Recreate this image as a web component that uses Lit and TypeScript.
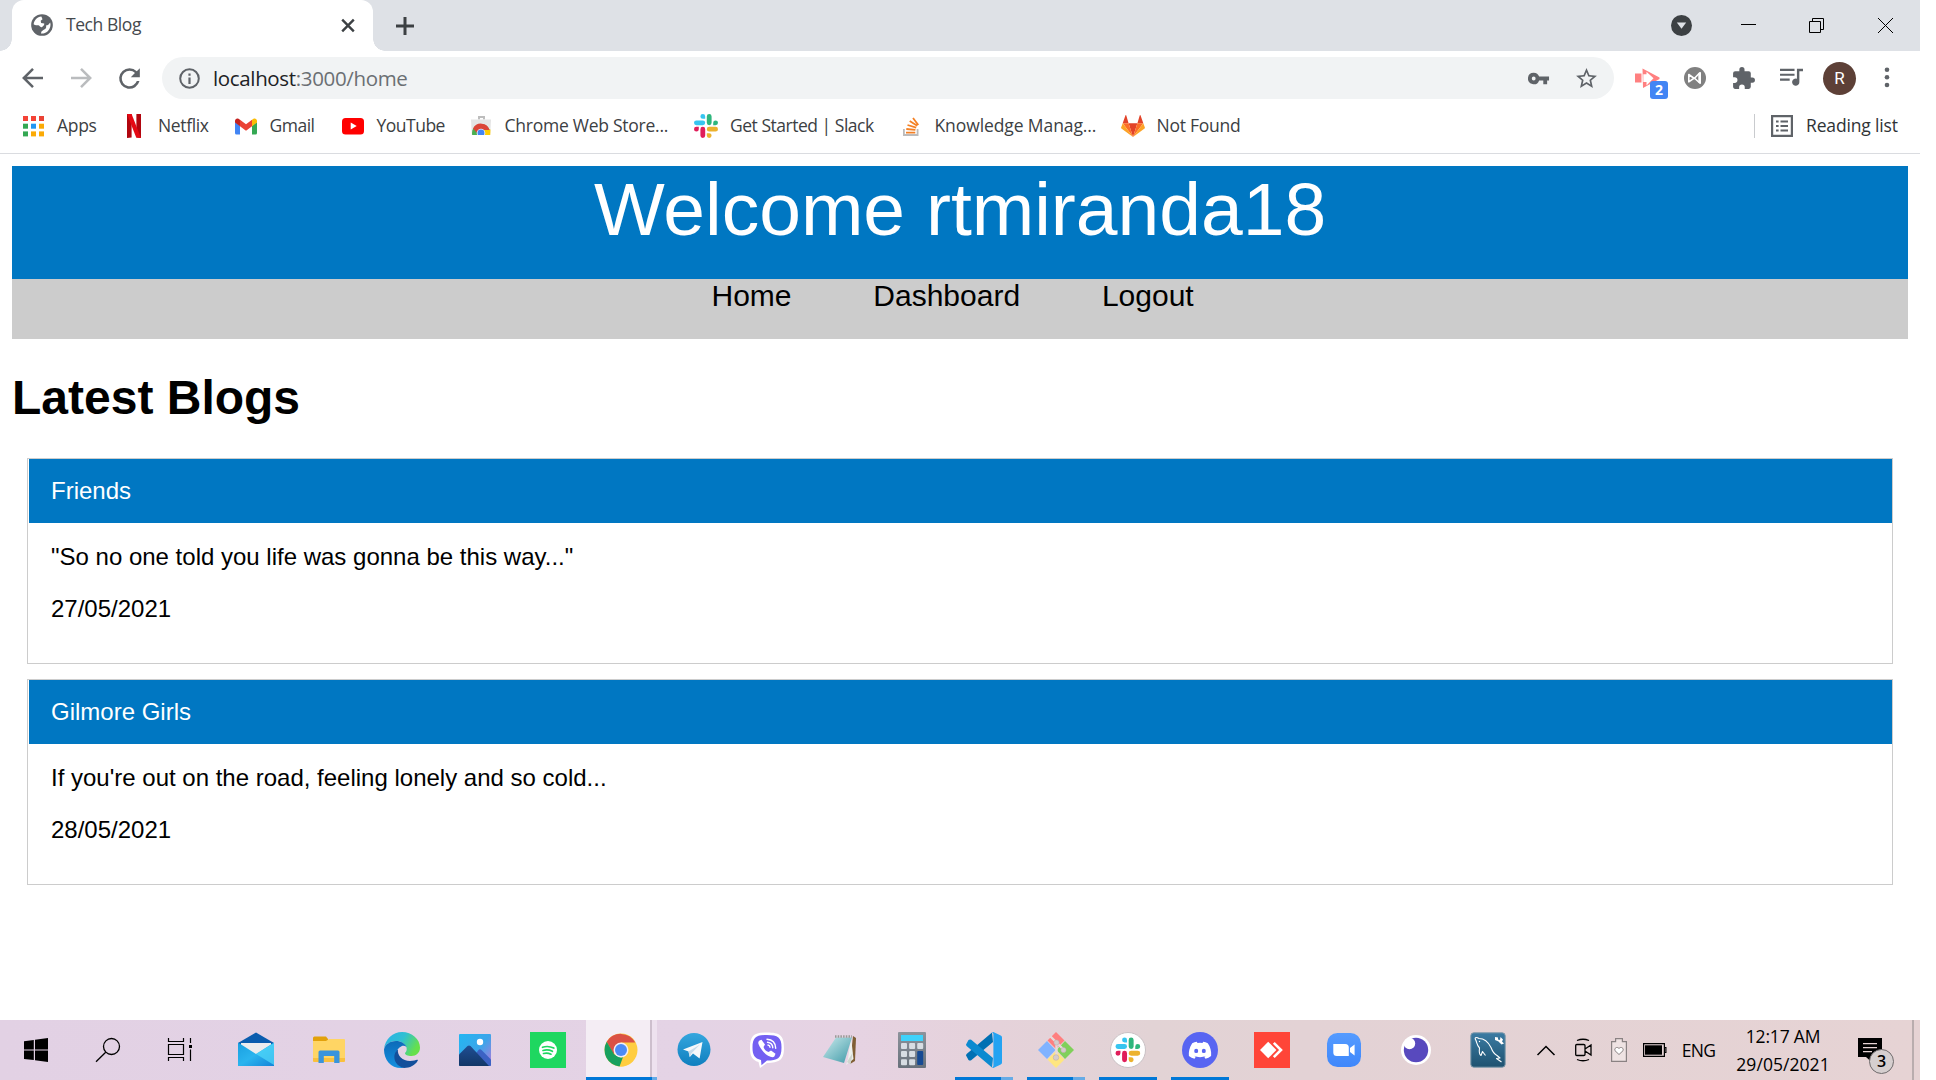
import { LitElement, html, css, svg, nothing } from "lit";
import type { TemplateResult } from "lit";
import { customElement, property } from "lit/decorators.js";
import { styleMap } from "lit/directives/style-map.js";

const icon = (size: number, box: string, body: unknown, h = size) =>
  html`<svg class="icon" width=${size} height=${h} viewBox=${box} aria-hidden="true">${body}</svg>`;

const label = (text: string, spacing = 0) =>
  html`<span class="label" style=${styleMap({ letterSpacing: `${spacing}px` })}>${text}</span>`;

const shared = css`
  :host { display: block; box-sizing: border-box; }
  * { box-sizing: border-box; }
  .icon { display: block; flex: none; overflow: visible; }
  .label { white-space: nowrap; }
  .cell { display: flex; align-items: center; justify-content: center; flex: none; }
`;

const slackMark = svg`
  <path fill="#36c5f0" d="M8.8 0a2.4 2.4 0 1 0 0 4.8h2.4V2.4A2.4 2.4 0 0 0 8.8 0zM8.8 6.4H2.4a2.4 2.4 0 1 0 0 4.8h6.4a2.4 2.4 0 0 0 0-4.8z"/>
  <path fill="#2eb67d" d="M24 8.8a2.4 2.4 0 1 0-4.8 0v2.4h2.4A2.4 2.4 0 0 0 24 8.8zM17.6 8.8V2.4a2.4 2.4 0 1 0-4.8 0v6.4a2.4 2.4 0 1 0 4.8 0z"/>
  <path fill="#ecb22e" d="M15.2 24a2.4 2.4 0 1 0 0-4.8h-2.4v2.4a2.4 2.4 0 0 0 2.4 2.4zM15.2 17.6h6.4a2.4 2.4 0 1 0 0-4.8h-6.4a2.4 2.4 0 0 0 0 4.8z"/>
  <path fill="#e01e5a" d="M0 15.2a2.4 2.4 0 1 0 4.8 0v-2.4H2.4A2.4 2.4 0 0 0 0 15.2zM6.4 15.2v6.4a2.4 2.4 0 1 0 4.8 0v-6.4a2.4 2.4 0 0 0-4.8 0z"/>`;

const dots = ["#f44336", "#f44336", "#ea4335", "#34a853", "#2196f3", "#fbaa05", "#34a853", "#fbaa05", "#fbaa05"];

const bookmarks: { text: string; width: number; spacing: number; icon: TemplateResult }[] = [
  {
    text: "Apps", width: 101, spacing: -0.3,
    icon: icon(24, "0 0 24 24", dots.map((c, i) => svg`<rect x=${2 + (i % 3) * 8} y=${2 + Math.floor(i / 3) * 7.7} width="5" height="5" fill=${c}/>`)),
  },
  {
    text: "Netflix", width: 111.5, spacing: -0.35,
    icon: icon(24, "0 0 24 24", svg`<path fill="#b1060f" d="M5 0h4.600v23.400L5 24zM14.400 0H19v24l-4.600-.6z"/><path fill="#e50914" d="M5 0h4.600L19 24l-4.800-.6z"/>`),
  },
  {
    text: "Gmail", width: 107, spacing: -0.5,
    icon: icon(24, "0 0 24 24", svg`
      <path fill="#4285f4" d="M1 8l5 3.8V20.5H2.5A1.5 1.5 0 0 1 1 19z"/>
      <path fill="#34a853" d="M18 11.8L23 8v11a1.5 1.5 0 0 1-1.500 1.500H18z"/>
      <path fill="#fbbc04" d="M18 5.800l1.200-.9C20.800 3.700 23 4.800 23 6.800V8.500l-5 3.700z"/>
      <path fill="#ea4335" d="M6 5.800l6 4.500 6-4.500v6.400l-6 4.500-6-4.500z"/>
      <path fill="#c5221f" d="M1 6.800c0-2 2.200-3.100 3.800-1.900L6 5.800v6.400L1 8.500z"/>`),
  },
  {
    text: "YouTube", width: 128, spacing: -0.5,
    icon: icon(24, "0 0 24 24", svg`<rect x="1" y="4" width="22" height="16.500" rx="3.500" fill="#f00"/><path fill="#fff" d="M9.700 8.600v6.800l6-3.400z"/>`),
  },
  {
    text: "Chrome Web Store...", width: 225.5, spacing: -0.25,
    icon: icon(24, "0 0 24 24", svg`
      <path fill="#bdbdbd" d="M9 2h7v3.500h-2V4h-3v1.500H9z"/><path fill="#e4e4e4" d="M2 5.500h20L21.200 21H2.800z"/>
      <clipPath id="bag"><path d="M2 5.500h20L21.200 21H2.800z"/></clipPath>
      <g clip-path="url(#bag)"><circle cx="12" cy="19" r="9" fill="#4caf50"/><path fill="#ffcd00" d="M12 15.500h10V22H12z"/><path fill="#db4437" d="M4 14.500a9 9 0 0 1 16.600 1.500H12l-3 4z"/>
      <circle cx="12" cy="19" r="4.300" fill="#e8eefb"/><circle cx="12" cy="19" r="3.400" fill="#4285f4"/></g>`),
  },
  { text: "Get Started | Slack", width: 204.5, spacing: -0.48, icon: icon(24, "0 0 24 24", slackMark) },
  {
    text: "Knowledge Manag...", width: 222, spacing: -0.1,
    icon: icon(24, "0 0 24 24", svg`<path fill="none" stroke="#bcbbbb" stroke-width="1.800" d="M4.900 15v6h13.700v-6"/>
      <path fill="none" stroke="#f48024" stroke-width="1.800" d="M7 18.600h9.300M7.300 15l9.100.9M8.500 11l8.700 2.600M10.700 7l7.500 4.700M14 4l5.300 7"/>`),
  },
  {
    text: "Not Found", width: 300, spacing: -0.25,
    icon: icon(24, "0 0 24 24", svg`
      <path fill="#e24329" d="M12 23l4.400-13.700H7.600zM4.500 1.200L1.700 9.300h5.900L5.200 1.200a.4.400 0 0 0-.7 0zM19.500 1.200l2.800 8.100h-5.900l2.400-8.100a.4.400 0 0 1 .7 0z"/>
      <path fill="#fc6d26" d="M12 23L7.600 9.300H1.700zM12 23l4.400-13.700h5.900z"/>
      <path fill="#fca326" d="M1.700 9.300L.1 13.600a.9.900 0 0 0 .3 1L12 23zM22.300 9.300l1.600 4.300a.9.900 0 0 1-.3 1L12 23z"/>`),
  },
];

const arrow = svg`<path fill="none" stroke="currentColor" stroke-width="2.500" d="M22 12H3.500M12 2.800L2.800 12l9.200 9.200"/>`;

@customElement("browser-chrome")
export class BrowserChrome extends LitElement {
  static styles = [shared, css`
    :host { font-family: "Open Sans", "Noto Sans", sans-serif; color: #3c4043; width: 1920px; }
    .strip { display: flex; align-items: center; height: 51px; background: #dee1e6; padding-left: 12px; }
    .tab { position: relative; display: flex; align-items: center; width: 361px; height: 51px; background: #fff; border-radius: 12px 12px 0 0; padding: 0 13px 1px 17px; font-size: 17.500px; color: #45494d; }
    .tab::before, .tab::after { content: ""; position: absolute; bottom: 0; width: 12px; height: 12px; }
    .tab::before { left: -12px; background: radial-gradient(circle at 0 0, transparent 11.5px, #fff 12px); }
    .tab::after { right: -12px; background: radial-gradient(circle at 100% 0, transparent 11.5px, #fff 12px); }
    .title { flex: 1; padding: 0 0 2px 11px; }
    .plus { width: 64px; height: 50px; color: #3c4043; }
    .space { flex: 1; }
    .more { width: 64px; height: 50px; }
    .win { width: 69px; height: 43px; color: #000; }
    .toolbar { display: flex; align-items: center; height: 54px; background: #fff; padding-left: 9px; color: #5f6368; }
    .dim { color: #babcbe; }
    .omni { display: flex; align-items: center; width: 1452px; height: 42px; margin: 0 14px 0 8px; padding: 0 4px 0 15px; border-radius: 21px; background: #f1f3f4; font-size: 20.500px; }
    .url { flex: 1; padding: 0 0 1px 11px; letter-spacing: -0.35px; color: #6b6f73; line-height: 40px; }
    .host { color: #202124; }
    .ext { position: relative; width: 48px; height: 42px; }
    .count { position: absolute; left: 22px; top: 24px; width: 18px; height: 18px; border-radius: 3px; background: #4285f4; color: #fff; font: bold 14px/18px "Open Sans", sans-serif; text-align: center; }
    .avatar { width: 33px; height: 33px; border-radius: 50%; background: #5d4037; color: #fff; font: 17px/33px Roboto, sans-serif; text-align: center; }
    .marks { display: flex; align-items: center; height: 48px; padding: 0 0 6px 21px; font-size: 17.500px; background: #fff; }
    .marks .label { padding-bottom: 2px; }
    .mark { display: flex; align-items: center; gap: 12px; flex: none; }
    .reading { display: flex; align-items: center; width: 166px; height: 24px; border-left: 1px solid #c9cbce; padding-left: 16px; gap: 13px; color: #303336; }
    .rule { height: 1px; background: #dadce0; }
    .w48 { width: 48px; } .w49 { width: 49px; } .w38 { width: 38px; } .w58 { width: 58px; } .w59 { width: 59px; } .w36 { width: 36px; }
  `];

  render() {
    return html`
      <div class="strip">
        <div class="tab">
          ${icon(26, "0 0 24 24", svg`<circle cx="12" cy="12" r="10" fill="#5f6368"/><path fill="#fff" d="M11.400 4.200C7.600 4.600 4.600 7.700 4.300 11.300c1.200 1.100 2.800 1.100 4.200.9 1.300.2 1.500 1.500 2.800 1.800 1.500.2 1.400-1.300 2.600-1.700l.2-1.800-2.900-.3-.4-2.200 1.700-1.200z"/><path fill="#fff" d="M19.600 9.800c.8 2.800-.1 5.900-2.300 7.900-1.700 1.600-4 2.300-6.300 2.100l.5-1.900c1.500-.5 1.500-1.600 3-1.900 1.600-.6 1.500-2.400 1.200-3.500l1.900-.5z"/>`)}
          <span class="title">${label("Tech Blog", -0.43)}</span>
          ${icon(24, "0 0 24 24", svg`<path fill="none" stroke="#3c4043" stroke-width="2.400" d="M6.200 6.700l11.600 11.600M17.800 6.700L6.200 18.300"/>`)}
        </div>
        <div class="cell plus">${icon(18, "0 0 18 18", svg`<path fill="none" stroke="currentColor" stroke-width="3" d="M9 0v18M0 9h18"/>`)}</div>
        <div class="space"></div>
        <div class="cell more">${icon(21, "0 0 21 21", svg`<circle cx="10.500" cy="10.500" r="10.500" fill="#3c4043"/><path fill="#dee1e6" d="M5.800 7.500h9.400l-4.700 6.200z"/>`)}</div>
        <div class="cell win">${icon(15, "0 0 15 15", svg`<path stroke="#000" d="M1 6.500h15"/>`)}</div>
        <div class="cell win">${icon(15, "0 0 15 15", svg`<path fill="none" stroke="#000" d="M.5 3.500h11v11H.5zM3.500 3.500v-3h11v11h-3"/>`)}</div>
        <div class="cell win">${icon(15, "0 0 15 15", svg`<path stroke="#000" d="M0 0l15 15M15 0L0 15"/>`)}</div>
      </div>
      <div class="toolbar">
        <div class="cell w48">${icon(24, "0 0 24 24", arrow)}</div>
        <div class="cell w48 dim">${icon(24, "0 0 24 24", svg`<g transform="translate(24 0) scale(-1 1)">${arrow}</g>`)}</div>
        <div class="cell w49">${icon(31, "0 0 24 24", svg`<path fill="currentColor" d="M17.650 6.350A7.960 7.960 0 0 0 12 4a8 8 0 1 0 7.730 10h-2.080A6 6 0 1 1 12 6c1.660 0 3.140.690 4.220 1.780L13 11h7V4z"/>`)}</div>
        <div class="omni">
          ${icon(25, "0 0 25 25", svg`<circle cx="12.500" cy="12.500" r="9.300" fill="none" stroke="#5f6368" stroke-width="2"/><path stroke="#5f6368" stroke-width="2.200" d="M12.500 11.500v6.500M12.500 7.400v2.300"/>`)}
          <span class="url"><span class="host">localhost</span>:3000/home</span>
          <div class="cell w48">${icon(23, "0 0 24 24", svg`<path fill="currentColor" d="M12.650 10A5.990 5.990 0 0 0 7 6a6 6 0 1 0 5.650 8H17v4h4v-4h2v-4H12.650zM7 14a2 2 0 1 1 0-4 2 2 0 0 1 0 4z"/>`)}</div>
          <div class="cell w48">${icon(25, "0 0 24 24", svg`<path fill="currentColor" d="M22 9.240l-7.190-.620L12 2 9.190 8.630 2 9.240l5.460 4.730L5.820 21 12 17.270 18.180 21l-1.630-7.030L22 9.240zM12 15.400l-3.760 2.270 1-4.280-3.320-2.880 4.380-.380L12 6.100l1.710 4.040 4.380.380-3.320 2.880 1 4.280L12 15.400z"/>`)}</div>
        </div>
        <div class="cell ext">
          ${icon(34, "0 0 34 34", svg`<path fill="#ff8080" d="M0 12.500h6.500v9H0z"/><path fill="#ff8080" fill-rule="evenodd" d="M7.500 7.500L24.500 16.500v1.500L8 27zM8.300 13.200v7.800h3.200v3.500l7-7.300-7-6.500v2.500z"/>`)}
          <span class="count">2</span>
        </div>
        <div class="cell w38">${icon(22, "0 0 22 22", svg`<circle cx="11" cy="11" r="11" fill="#808080"/><path fill="none" stroke="#fff" stroke-width="1.600" stroke-linejoin="round" d="M4.800 7.500l5.500 4 5.500-5.700V16l-5.500-5L4.800 14.800z"/><path fill="#fff" d="M14.300 6.500L17 5v12l-2.700-1.500z"/>`)}</div>
        <div class="cell w58">${icon(25, "0 0 24 24", svg`<path fill="currentColor" d="M20.500 11H19V7a2 2 0 0 0-2-2h-4V3.500a2.500 2.500 0 0 0-5 0V5H4a2 2 0 0 0-2 2v3.800h1.500a2.700 2.700 0 0 1 0 5.400H2V20c0 1.100.900 2 2 2h3.800v-1.500a2.700 2.700 0 0 1 5.400 0V22H17a2 2 0 0 0 2-2v-4h1.500a2.500 2.500 0 0 0 0-5z"/>`)}</div>
        <div class="cell w38">${icon(29, "0 0 24 24", svg`<path fill="currentColor" d="M14.500 4H2.500v1.800h12zM14.500 8H2.500v1.800h12zM2.500 13.800h8V12H2.500zM16.500 4v8.200a3 3 0 1 0 2 2.800V6h3V4z"/>`)}</div>
        <div class="cell w59"><div class="avatar">R</div></div>
        <div class="cell w36">${icon(6, "0 0 6 24", svg`<g fill="#5f6368"><circle cx="3" cy="3.700" r="2.300"/><circle cx="3" cy="11.300" r="2.300"/><circle cx="3" cy="19" r="2.300"/></g>`, 24)}</div>
      </div>
      <div class="marks">
        ${bookmarks.map((b) => html`<div class="mark" style=${styleMap({ width: `${b.width}px` })}>${b.icon}${label(b.text, b.spacing)}</div>`)}
        <div class="space"></div>
        <div class="reading">
          ${icon(22, "0 0 22 22", svg`<path fill="none" stroke="#5f6368" stroke-width="2.200" d="M1.100 1.100h19.800v19.800H1.100z"/><path stroke="#5f6368" stroke-width="2" d="M5 6.500h2.600M9.500 6.500H17M5 11h2.600M9.500 11H17M5 15.500h2.600M9.500 15.500H17"/>`)}
          ${label("Reading list", -0.15)}
        </div>
      </div>
      <div class="rule"></div>`;
  }
}

interface Post { title: string; text: string; date: string; }

@customElement("blog-page")
export class BlogPage extends LitElement {
  static styles = [shared, css`
    :host { width: 1920px; height: 866px; padding: 12px; background: #fff; color: #000; font: 24px/27px "Liberation Sans", Arial, sans-serif; }
    .banner { height: 113px; background: #0077c2; color: #fff; font-size: 75px; line-height: 86px; text-align: center; }
    .nav { display: flex; gap: 81.800px; height: 60px; background: #ccc; padding-left: 699.500px; font-size: 30px; line-height: 34px; }
    .heading { font-size: 48px; line-height: 54px; font-weight: bold; padding: 32px 0 33px; }
    .list { display: flex; flex-direction: column; gap: 15px; padding: 0 15px; }
    .card { height: 206px; border: 1px solid #ccc; padding-left: 1px; }
    .top { height: 64px; background: #0077c2; color: #fff; padding: 18px 22px; }
    .text { padding: 20px 22px 0; }
    .date { padding: 25px 22px 0; }
  `];

  @property({ attribute: false }) user = "rtmiranda18";
  @property({ attribute: false }) posts: Post[] = [
    { title: "Friends", text: '"So no one told you life was gonna be this way..."', date: "27/05/2021" },
    { title: "Gilmore Girls", text: "If you're out on the road, feeling lonely and so cold...", date: "28/05/2021" },
  ];

  render() {
    return html`
      <div class="banner">Welcome ${this.user}</div>
      <div class="nav">${["Home", "Dashboard", "Logout"].map((t) => html`<span>${t}</span>`)}</div>
      <div class="heading">Latest Blogs</div>
      <div class="list">
        ${this.posts.map((p) => html`<div class="card">
          <div class="top">${p.title}</div>
          <div class="text">${p.text}</div>
          <div class="date">${p.date}</div>
        </div>`)}
      </div>`;
  }
}

const B = "0 0 36 36";
type App = { icon: TemplateResult; width: number; state?: "active" | "multi" | "open" };

const systemApps: App[] = [
  { width: 72, icon: icon(36, B, svg`<path d="M6 9.300l9.800-1.400v9.600H6zM17 7.700L30 6v11.500H17zM6 18.600h9.800v9.500L6 26.900zM17 18.600h13V30l-13-1.700z"/>`) },
  { width: 72, icon: icon(36, B, svg`<g fill="none" stroke="#000" stroke-width="1.300"><circle cx="21.500" cy="14.500" r="8"/><path d="M15.700 20.200L6 29.700"/></g>`) },
  { width: 76, icon: icon(36, B, svg`<path fill="none" stroke="#000" stroke-width="1.200" d="M6.500 6v3.500h15V6M6.500 12.500h15v10h-15zM6.500 29v-3.500h15V29M28.500 6v5M28.500 17.500V29"/><path d="M27 13h3v3h-3z"/>`) },
];

const apps: App[] = [
  { width: 73, icon: icon(36, B, svg`
    <defs><linearGradient id="mail" x2="1" y2="1"><stop offset="0" stop-color="#1a9fe0"/><stop offset=".5" stop-color="#2ab4ee"/><stop offset="1" stop-color="#1583d8"/></linearGradient></defs>
    <path fill="#0a5cae" d="M0 11L18 .5 36 11v3H0z"/><path fill="#ececee" d="M3 11h30v4L18 24 3 15z"/>
    <path fill="url(#mail)" d="M0 10.500L18 22l18-11.500V34H0z"/><path fill="#4fd5f8" d="M36 11L18 22l18 11z" opacity=".75"/>`) },
  { width: 73, icon: icon(36, B, svg`
    <path fill="#e2a10b" d="M2 6a1.500 1.500 0 0 1 1.500-1.500H15L17 7v4H2z"/><path fill="#ffd564" d="M2 9h13l3-2h15a1 1 0 0 1 1 1v20.500a1.500 1.500 0 0 1-1.500 1.500h-29A1.500 1.500 0 0 1 2 28.500z"/>
    <path fill="#f9c03d" d="M2 26h32v2.500a1.500 1.500 0 0 1-1.500 1.500h-29A1.500 1.500 0 0 1 2 28.500z"/>
    <path fill="#3994dc" d="M7.500 20a1.500 1.500 0 0 1 1.500-1.500h18a1.500 1.500 0 0 1 1.500 1.500v11h-5.300v-7H12.800v7H7.500z"/>`) },
  { width: 73, icon: icon(36, B, svg`
    <defs><linearGradient id="eTop" x2="1" y2=".4"><stop offset="0" stop-color="#2bb0e8"/><stop offset=".55" stop-color="#2fc0d2"/><stop offset="1" stop-color="#66e04c"/></linearGradient>
    <linearGradient id="eMid" x2="0" y2="1"><stop offset="0" stop-color="#0d6ab8"/><stop offset="1" stop-color="#1390e0"/></linearGradient></defs>
    <path fill="url(#eTop)" d="M0 17C1 7 9 0 18 0c10 0 18 7.300 18 15.500 0 5.500-4 8.500-8.500 8.500-4 0-6.500-1.500-6.500-2.800 0-.8 1.700-1.200 1.700-4.200C22.700 12.500 17.500 9 12 9 5.500 9 1 13 0 17z"/>
    <path fill="url(#eMid)" d="M0 17.500C1 12.500 6 9 12 9c5 0 9.500 2.700 10.500 6-1.500-1.300-3.500-1.500-5-.7-3.500 1.700-5.500 5-5.500 8.700 0 6 3 11 8 12.900C8 37.500 0 29 0 17.500z"/>
    <path fill="#124f9b" d="M14 17.500c-1 6 4.500 11.500 12 11.500 3.500 0 6-.8 7-1.200.7-.2 1.100.3.700 1C31 33.500 26 36 20 36c-7-1.500-10.500-7.500-9.500-13 .5-2.500 2-4.500 3.500-5.500z"/>`) },
  { width: 73, icon: icon(36, B, svg`
    <defs><linearGradient id="sky" x2="1" y2=".8"><stop offset="0" stop-color="#23b6f2"/><stop offset=".6" stop-color="#3ba5ea"/><stop offset="1" stop-color="#9b80dd"/></linearGradient><linearGradient id="hill" x2="0" y2="1"><stop offset="0" stop-color="#204e94"/><stop offset="1" stop-color="#123767"/></linearGradient></defs>
    <rect x="2" y="2" width="32" height="32" rx="1" fill="url(#sky)"/><circle cx="23" cy="10" r="3.200" fill="#fff"/>
    <path fill="#3c62c4" d="M17 24l4.500-6q1.500-1.500 3 0L34 27.500V33q0 1-1 1H20z"/>
    <path fill="url(#hill)" d="M2 22.500L10.500 14q1.500-1.200 3 0L32 34H3q-1 0-1-1z"/>`) },
  { width: 73, icon: icon(36, B, svg`<path fill="#1ed760" d="M0 0h36v36H0z"/><circle cx="18" cy="18" r="9" fill="#fff"/><path fill="none" stroke="#1ed760" stroke-linecap="round" stroke-width="1.700" d="M12.500 15.300c3.600-1.200 7.800-.9 11.300.8M13 18.500c3.200-.9 6.500-.6 9.400.8M13.500 21.500c2.600-.7 5.200-.4 7.500.7"/>`) },
  { width: 73, state: "active", icon: icon(36, B, svg`
    <circle cx="18" cy="18" r="16.500" fill="#ffcd40"/><path fill="#db5144" d="M3.700 9.800A16.500 16.500 0 0 1 32.300 10.500H18L10.500 22z"/>
    <path fill="#18a05e" d="M3.700 9.800l7.400 12.500 6.900 3.200 2-.5-3.400 9.400A16.500 16.500 0 0 1 3.700 9.800z"/><path fill="#ffcd40" d="M25 18l7-7.500a16.500 16.500 0 0 1-15.400 24L24.500 22z"/>
    <circle cx="18" cy="18" r="7.500" fill="#f3edf3"/><circle cx="18" cy="18" r="6" fill="#4c8bf5"/>`) },
  { width: 73, icon: icon(36, B, svg`
    <defs><linearGradient id="tg" x2="0" y2="1"><stop offset="0" stop-color="#35a6de"/><stop offset="1" stop-color="#0f7fbf"/></linearGradient></defs><circle cx="18" cy="17.500" r="16.500" fill="url(#tg)"/>
    <path fill="#f5f8fa" d="M7 17.500L26.500 10 23.600 26.500l-6.600-5-3.200 3.500-1.300-5.500z"/><path fill="#c8dceb" d="M12.500 19.500L24 12.500l-8.500 8.700-1.700 4z"/>`) },
  { width: 73, icon: icon(36, B, svg`
    <path fill="#fff" d="M18 .5c13 0 17 3 17 15.500S30 30.500 18 31l-7 5-1.500-6C3 28 1 24 1 16 1 3.500 5 .5 18 .5z"/>
    <path fill="#7360f2" d="M18 3c11 0 14.500 2.500 14.500 12.500 0 11-4 13-14.500 13l-5.500 4.800-.5-5.300C5.500 26.500 3.500 23 3.500 15.500 3.500 5.500 7 3 18 3z"/>
    <path fill="#fff" d="M10.500 8.500l2-.8 3.500 4.800-1.500 2.500c.8 2.500 2.500 4.200 5 5l2.500-1.500 4.500 3.300-1 2.500c-1 1.300-2.500 1.200-4 .5C16 22.500 12 18 9.500 12c-.5-1.500-.2-2.700 1-3.500z"/>
    <path fill="none" stroke="#fff" stroke-width="1.400" stroke-linecap="round" d="M18 7.300c5.500.3 8.500 3.500 8.700 9M18.500 10.300c3.400.4 5.200 2.400 5.300 5.500M19 13c1.300.2 2 1 2 2.300"/>`) },
  { width: 72, icon: icon(36, B, svg`
    <defs><linearGradient id="pad" x2="1" y2="1"><stop offset="0" stop-color="#caeaec"/><stop offset="1" stop-color="#3f9aa8"/></linearGradient></defs>
    <path fill="#805f35" d="M31 4l3 2-1 23-5 3z"/><path fill="#eef2ee" d="M29 5l2.500 22L24 33l2-6z"/><path fill="#cfd6cf" d="M25 30l3.500 2.500L31 20z"/>
    <path fill="url(#pad)" d="M14 5.500h16L22 31 1 25z"/><path fill="none" stroke="#9a9a96" stroke-width="2.500" stroke-dasharray="1.500 1.200" d="M13 4.500h17"/>`) },
  { width: 72, icon: icon(36, B, svg`
    <defs><linearGradient id="calc" x2="0" y2="1"><stop offset="0" stop-color="#8d939c"/><stop offset="1" stop-color="#68717b"/></linearGradient></defs><rect x="4" width="28" height="36" rx="1" fill="url(#calc)"/><path fill="#3fd2fb" d="M7 3h22v6H7z"/>
    ${[0, 1, 2].map((r) => [0, 1, 2].map((c) => (c === 2 && r > 0 ? nothing : svg`<rect x=${7 + c * 8.100} y=${11 + r * 8.100} width="6" height="6" rx="1" fill="#d7dde3"/>`)))}
    <rect x="23.200" y="19" width="6" height="14" rx="1" fill="#164a93"/>`) },
  { width: 72, state: "multi", icon: icon(36, B, svg`
    <path fill="#0070b3" d="M.6 24.500q-1.200-1.200 0-2.500L26 .5 27 10 5.200 28.200q-1.400.9-2.700-.3z"/><path fill="#0b8ad0" d="M.6 11.500q-1.200 1.200 0 2.500L26 35.500 27 26 5.200 7.800q-1.400-.9-2.700.3z"/>
    <path fill="#24a3f2" d="M26 35.600q1.400-.5 1.400-1.800V2.200Q27.400.9 26 .4l1.300-.3 7.400 3.400Q36 4.200 36 5.600v24.800q0 1.400-1.300 2.100l-7.400 3.400z"/>`) },
  { width: 72, state: "multi", icon: icon(36, B, svg`
    <path fill="#ff7f7f" d="M18 0l8.500 8.500L18 17 9.500 8.500z"/><path fill="#80b3ff" d="M9 9l8.500 9L9 27 0 18z"/><path fill="#80d05a" d="M27 9l9 9-9 9-8.500-9z"/><path fill="#ffe680" d="M18 19l8.500 8.500L18 36l-8.500-8.500z"/>
    <g fill="none" stroke="#e6dada" stroke-width="2.400"><path d="M12.500 4.500L26 18M18.500 11v14"/></g><g fill="#d5cccc" stroke="#b8a8a8" stroke-width=".5"><circle cx="18.500" cy="10.500" r="2.600"/><circle cx="25.500" cy="18" r="2.600"/><circle cx="18" cy="25.500" r="2.800"/></g>`) },
  { width: 72, state: "open", icon: icon(36, B, svg`<circle cx="18" cy="18" r="17.500" fill="#fff" stroke="#c9c1c4"/><g transform="translate(5.500 5.500) scale(1.030)">${slackMark}</g>`) },
  { width: 72, state: "open", icon: icon(36, B, svg`<circle cx="18" cy="18" r="18" fill="#5865f2"/>
    <path fill="#fff" d="M25.800 11.200a18 18 0 0 0-4.600-1.500l-.7 1.300a17 17 0 0 0-5 0l-.7-1.300a18 18 0 0 0-4.600 1.500C7.300 15.500 6.500 19.800 6.900 24a18 18 0 0 0 5.600 2.800l1.300-2-1.900-1c4 1.800 8.300 1.800 12.200 0l-1.900 1 1.300 2A18 18 0 0 0 29.100 24c.5-4.900-.8-9.100-3.300-12.800z"/><ellipse cx="14.200" cy="18.900" rx="2" ry="2.200" fill="#5865f2"/><ellipse cx="21.800" cy="18.900" rx="2" ry="2.200" fill="#5865f2"/>`) },
  { width: 72, icon: icon(36, B, svg`<path fill="#ff4538" d="M0 0h36v36H0z"/><path fill="#fff" d="M6 18l8.200-8.200 8.200 8.200-8.200 8.200z"/><path fill="none" stroke="#fff" stroke-width="2.600" d="M19.800 10.800L27 18l-7.200 7.200"/>`) },
  { width: 72, icon: icon(36, B, svg`
    <defs><linearGradient id="zm" x2="0" y2="1"><stop offset="0" stop-color="#559bff"/><stop offset="1" stop-color="#3f87fb"/></linearGradient></defs><rect x="1" y="1" width="34" height="34" rx="10.500" fill="url(#zm)"/><path fill="#fff" d="M7.300 12h12a3.500 3.500 0 0 1 3.500 3.500V24h-12a3.500 3.500 0 0 1-3.500-3.500zM24 16l4.600-3.600v11.200L24 20z"/>`) },
  { width: 72, icon: icon(36, B, svg`<circle cx="18" cy="18" r="15" fill="#fff"/><circle cx="18" cy="18" r="12.200" fill="#5849be"/><circle cx="11.500" cy="11.500" r="5.700" fill="#fff"/>`) },
  { width: 72, icon: icon(36, B, svg`
    <defs><linearGradient id="sql" x2="0" y2="1"><stop offset="0" stop-color="#3b7ba3"/><stop offset="1" stop-color="#1f5270"/></linearGradient></defs><rect x=".800" y=".800" width="34.400" height="34.400" rx="3" fill="url(#sql)" stroke="#7f9aab"/>
    <path fill="none" stroke="#fff" stroke-width="1.100" stroke-linejoin="round" d="M6 8.500C4 5.500 6 4.500 9 6.500c5 0 9 3 12 9 1.500 4 3 6.500 6 8l3 2.500-3.500.5 5 3.500M6 8.500c1 3 1 5 3.500 7.500-.5 4 .5 7 1.500 7.500l1.500-4 3 4"/><circle cx="9.500" cy="9.500" r=".7" fill="#fff"/>
    <path fill="#fff" d="M25 5l3 .5v2l2 .5.500-3 2.500 2.500-1 2 2 2-2.500 1-3-3-3.500-1.500z"/>`) },
];

@customElement("task-bar")
export class TaskBar extends LitElement {
  static styles = [shared, css`
    :host { width: 1920px; color: #000; font-family: "Open Sans", "Noto Sans", sans-serif; }
    .bar { display: flex; height: 60px; background: linear-gradient(90deg, #e2d1e4 0, #e4d3e5 36%, #e6d3e3 44%, #e5d2da 52%, #e2d3d5 60%, #e3d2d5 68%, #e6d3d4 100%); }
    .app { position: relative; flex: none; padding: 12px 0 0 18px; }
    .active { background: linear-gradient(90deg, #f4edf4 64px, #cdbfcd 64px 66px, #eee2ef 66px 71px, transparent 71px) 1px 0 no-repeat; }
    .line { position: absolute; left: 7px; bottom: 0; width: 58px; height: 3px; background: #0078d7; }
    .multi .line { background: linear-gradient(90deg, #0078d7 46px, #66abe6 46px); }
    .active .line { left: 1px; width: 71px; background: linear-gradient(90deg, #0078d7 66px, #66abe6 66px); }
    .tray { display: flex; align-items: center; flex: 1; padding-left: 4px; font-size: 17.500px; }
    .t36 { width: 36px; } .t34 { width: 34px; } .t38 { width: 38px; } .t37 { width: 37px; }
    .lang { width: 50px; padding-left: 1px; height: 56px; }
    .clock { display: flex; flex-direction: column; align-items: center; width: 92px; flex: none; line-height: 28px; margin-left: 14px; }
    .note { position: relative; width: 58px; flex: none; height: 60px; padding: 18px 0 0 14px; margin-left: 15px; }
    .badge { position: absolute; left: 25px; top: 29px; width: 25px; height: 25px; border: 1px solid #6f6b6c; border-radius: 50%; background: #d6cfcf; text-align: center; font-size: 16px; line-height: 23px; font-weight: 600; }
    .peek { flex: none; width: 2px; height: 60px; background: #b9adae; margin-left: auto; margin-right: 6px; }
  `];

  private entry(app: App) {
    return html`<div class="app ${app.state ?? ""}" style=${styleMap({ width: `${app.width}px` })}>${app.icon}${app.state ? html`<div class="line"></div>` : nothing}</div>`;
  }

  render() {
    return html`<div class="bar">
      ${systemApps.map((a) => this.entry(a))}${apps.map((a) => this.entry(a))}
      <div class="tray">
        <div class="cell t36">${icon(18, "0 0 18 11", svg`<path fill="none" stroke="#000" stroke-width="1.500" d="M.5 10L9 1.500l8.500 8.500"/>`, 11)}</div>
        <div class="cell t38">${icon(17, "0 0 17 24", svg`<path fill="none" stroke="#000" stroke-width="1.300" d="M2 2.500Q8 0 14 2.500M2 21.500q6 2.500 12 0M.7 7.500q0-1 1-1h7q1.300 0 1.300 1v9q0 1-1.300 1h-7q-1 0-1-1zM10 11l6-4v10l-6-4"/>`, 24)}</div>
        <div class="cell t34">${icon(16, "0 0 16 24", svg`<path fill="#efe3e3" stroke="#8a8283" stroke-width="1.200" d="M.6 3.600h4V.6h6.800v3h4v19.800H.6z"/><path fill="#fff" stroke="#8a8283" d="M8 16.500l-4-3.800c-1-2.400 1.800-4.600 4-2.200 2.200-2.400 5-.2 4 2.200z"/>`, 24)}</div>
        <div class="cell t37">${icon(24, "0 0 24 14", svg`<path fill="none" stroke="#000" stroke-width="1.200" d="M.6 .6h20.800v12.800H.6zM21.400 4.500h1.500v5h-1.500"/><path d="M2 2.300h17v9.400H2z"/>`, 14)}</div>
        <div class="cell lang">${label("ENG", -0.7)}</div>
        <div class="clock">${label("12:17 AM", -0.2)}${label("29/05/2021", 0.05)}</div>
        <div class="note">
          ${icon(24, "0 0 24 24", svg`<path d="M0 0h24v19H13.500v5L8 19H0z"/><path stroke="#e6d3d4" stroke-width="1.200" d="M5 5.600h14M5 9.600h14M5 13.600h9"/>`)}
          <span class="badge">3</span>
        </div>
        <div class="peek"></div>
      </div>
    </div>`;
  }
}

@customElement("app-root")
export class AppRoot extends LitElement {
  static styles = css`
    :host { display: flex; flex-direction: column; width: 1936px; height: 1080px; background: #fff; overflow: hidden; }
  `;

  render() {
    return html`<browser-chrome></browser-chrome><blog-page></blog-page><task-bar></task-bar>`;
  }
}
